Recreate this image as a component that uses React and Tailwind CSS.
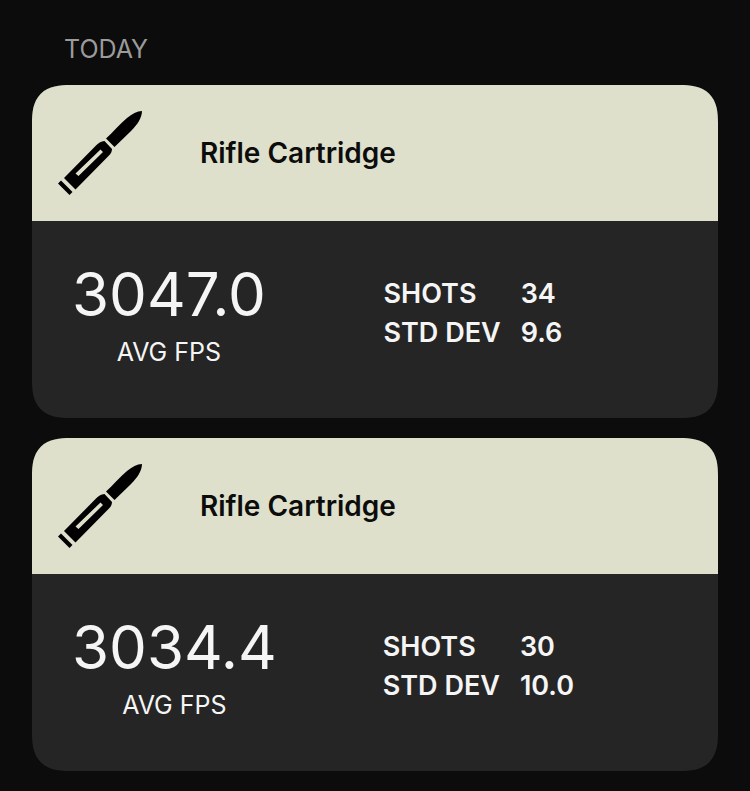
const sessions = [
  { id: 1, name: 'Rifle Cartridge', avgFps: '3047.0', shots: '34', stdDev: '9.6' },
  { id: 2, name: 'Rifle Cartridge', avgFps: '3034.4', shots: '30', stdDev: '10.0' },
];

function CartridgeIcon() {
  return (
    <svg className="h-[100px] w-[100px] shrink-0 text-black" viewBox="0 3 100 100" fill="currentColor" aria-hidden="true">
      <path d="M92 11C87 11 82 14 77 18C70 24 63 32 56 38.500L64.500 47L81 31C87 25 92 18 92 11Z" />
      <path
        fillRule="evenodd"
        d="M54.500 41C51 41 48 43.500 46 45.500L14 78L25.500 89.500L58.500 56C60.500 54 62 52 62 49ZM50.500 49.500L53 52L28.500 76L25.500 73.500Z"
      />
      <path d="M11 80.500L22.500 92L19.500 95L8 83.500Z" />
    </svg>
  );
}

function SessionCard({ session }) {
  return (
    <article className="overflow-hidden rounded-[38px] bg-[#252525] [corner-shape:superellipse(1.4)]">
      <header className="flex h-[136px] items-center gap-[50px] bg-[#dee0cb] pl-[18px] text-[#0c0c0c]">
        <CartridgeIcon />
        <h2 className="text-[28px] leading-8 font-semibold">{session.name}</h2>
      </header>

      <div className="flex h-[197px] items-center justify-between pr-[38px] pb-[14px] pl-10 text-[#f5f5f5]">
        <div className="text-center">
          <p className="text-[60px] leading-[78px]">{session.avgFps}</p>
          <p className="text-[25px] leading-[38px]">AVG FPS</p>
        </div>
        <dl className="grid grid-cols-[auto_auto] gap-x-5 text-[27px] leading-[39px] font-semibold">
          <dt>SHOTS</dt>
          <dd>{session.shots}</dd>
          <dt>STD DEV</dt>
          <dd>{session.stdDev}</dd>
        </dl>
        <span />
      </div>
    </article>
  );
}

export default function App() {
  return (
    <main className="min-h-screen bg-[#0c0c0c] px-8 pt-8 pb-5 font-['Inter',sans-serif]">
      <h1 className="mb-[19px] pl-8 text-[25px] leading-[34px] text-[#9b9b9b]">TODAY</h1>
      <div className="flex flex-col gap-5">
        {sessions.map((session) => (
          <SessionCard key={session.id} session={session} />
        ))}
      </div>
    </main>
  );
}
